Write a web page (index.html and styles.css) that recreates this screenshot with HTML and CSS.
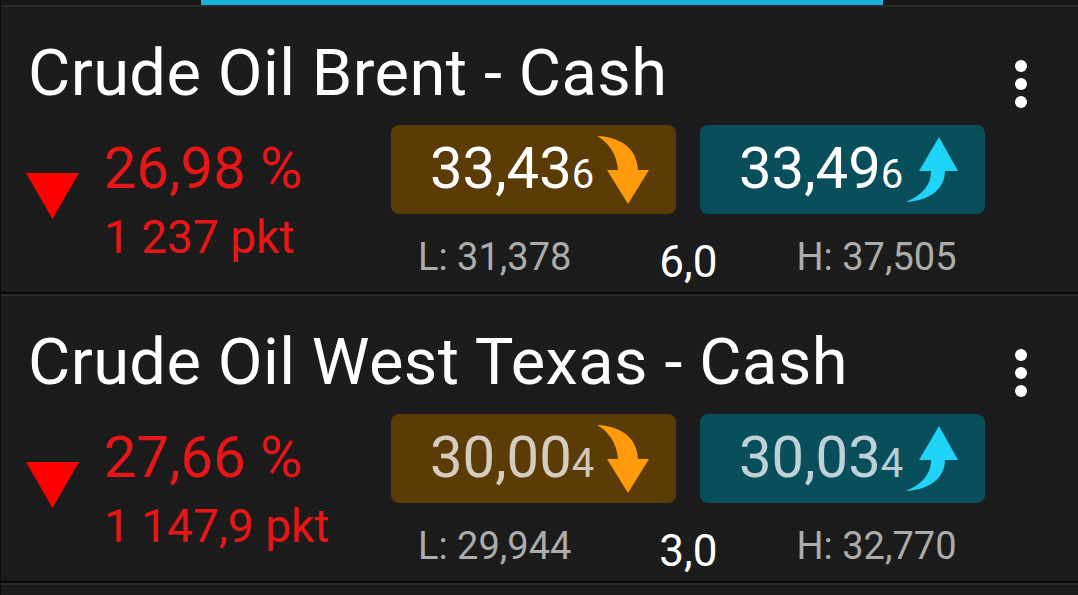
FILE: index.html
```html
<!DOCTYPE html>
<html lang="pl">
<head>
<meta charset="utf-8">
<title>Crude Oil</title>
<link rel="stylesheet" href="styles.css">
</head>
<body>
<div class="tabstrip"><div class="tab-indicator"></div></div>

<div class="row">
  <div class="head">
    <div class="title">Crude Oil Brent - Cash</div>
    <svg class="kebab" width="14" height="50" viewBox="0 0 14 50"><circle cx="7" cy="7" r="6" fill="#fff"/><circle cx="7" cy="25" r="6" fill="#fff"/><circle cx="7" cy="43" r="6" fill="#fff"/></svg>
  </div>
  <div class="body">
    <div class="change">
      <svg class="tri" width="53" height="46" viewBox="0 0 53 46"><polygon points="0,0 53,0 26.5,46" fill="#ff0000"/></svg>
      <div class="nums">
        <div class="pct">26,98 %</div>
        <div class="pkt">1 237 pkt</div>
      </div>
    </div>
    <div class="quotes">
      <div class="box sell">
        <span class="price">33,43<small>6</small></span>
        <svg class="arrow" width="52" height="68" viewBox="0 0 52 68"><path d="M0 0 C22 1 40 11 41 34 L52 34 L31 68 L10 34 L21 34 C20 18 11 6 0 0 Z" fill="#ff9b0c"/></svg>
      </div>
      <div class="box buy">
        <span class="price">33,49<small>6</small></span>
        <svg class="arrow" width="52" height="66" viewBox="0 0 52 66"><path d="M33 0 L52 34 L39 34 C39 52 23 64 0 65 C14 59 25 50 25 34 L13 34 Z" fill="#1fd4f6"/></svg>
      </div>
      <div class="stats">
        <span class="low">L: 31,378</span>
        <span class="spread">6,0</span>
        <span class="high">H: 37,505</span>
      </div>
    </div>
  </div>
</div>

<div class="row">
  <div class="head">
    <div class="title">Crude Oil West Texas - Cash</div>
    <svg class="kebab" width="14" height="50" viewBox="0 0 14 50"><circle cx="7" cy="7" r="6" fill="#fff"/><circle cx="7" cy="25" r="6" fill="#fff"/><circle cx="7" cy="43" r="6" fill="#fff"/></svg>
  </div>
  <div class="body">
    <div class="change">
      <svg class="tri" width="53" height="46" viewBox="0 0 53 46"><polygon points="0,0 53,0 26.5,46" fill="#ff0000"/></svg>
      <div class="nums">
        <div class="pct">27,66 %</div>
        <div class="pkt">1 147,9 pkt</div>
      </div>
    </div>
    <div class="quotes">
      <div class="box sell stale">
        <span class="price">30,00<small>4</small></span>
        <svg class="arrow" width="52" height="68" viewBox="0 0 52 68"><path d="M0 0 C22 1 40 11 41 34 L52 34 L31 68 L10 34 L21 34 C20 18 11 6 0 0 Z" fill="#ff9b0c"/></svg>
      </div>
      <div class="box buy stale">
        <span class="price">30,03<small>4</small></span>
        <svg class="arrow" width="52" height="66" viewBox="0 0 52 66"><path d="M33 0 L52 34 L39 34 C39 52 23 64 0 65 C14 59 25 50 25 34 L13 34 Z" fill="#1fd4f6"/></svg>
      </div>
      <div class="stats">
        <span class="low">L: 29,944</span>
        <span class="spread">3,0</span>
        <span class="high">H: 32,770</span>
      </div>
    </div>
  </div>
</div>
<div class="next"></div>
</body>
</html>
```
FILE: styles.css
```css
* { box-sizing: border-box; }
html, body {
  margin: 0;
  padding: 0;
  background: #1c1c1c;
  font-family: Roboto, "Liberation Sans", sans-serif;
  overflow: hidden;
}
body {
  width: 1078px;
  height: 595px;
  border-left: 1px solid #0c0c0c;
}
.tabstrip {
  height: 5px;
  background: #181818;
}
.tab-indicator {
  margin-left: 200px;
  width: 682px;
  height: 5px;
  background: #17b4d8;
}
.row {
  height: 289px;
  border-top: 2px solid #2a2a2a;
  border-bottom: 2px solid #070707;
}
.row:first-of-type {
  border-top: none;
  height: 287px;
}
.head {
  display: flex;
  justify-content: space-between;
  align-items: flex-start;
  height: 118px;
}
.title {
  margin: 34px 0 0 27px;
  font-size: 65px;
  line-height: 65px;
  letter-spacing: 0.4px;
  color: #ffffff;
  white-space: nowrap;
}
.kebab {
  margin: 52px 50px 0 0;
}
.body {
  display: flex;
  align-items: flex-start;
}
.change {
  display: flex;
  align-items: flex-start;
  width: 390px;
  padding-left: 25px;
}
.tri {
  margin-top: 48px;
}
.nums {
  margin-left: 25px;
  color: #e81616;
}
.pct {
  margin-top: 14px;
  font-size: 58px;
  line-height: 58px;
}
.pkt {
  margin-top: 17px;
  font-size: 46px;
  line-height: 46px;
}
.quotes {
  display: grid;
  grid-template-columns: 285px 285px;
  column-gap: 24px;
  padding-top: 0;
}
.box {
  height: 89px;
  border-radius: 8px;
  display: flex;
  align-items: center;
  padding-left: 39px;
}
.sell { background: #5b3b06; }
.buy { background: #094f5b; }
.price {
  color: #ffffff;
  font-size: 58px;
  line-height: 58px;
  margin-top: 4px;
  white-space: nowrap;
}
.price small {
  font-size: 40px;
}
.stale .price { color: rgba(255, 255, 255, 0.74); }
.arrow {
  margin-left: 3px;
}
.stats {
  grid-column: 1 / 3;
  display: flex;
  align-items: baseline;
  padding-left: 27px;
  margin-top: 19px;
  white-space: nowrap;
}
.low, .high {
  color: #acacac;
  font-size: 38px;
  line-height: 44px;
}
.spread {
  color: #ffffff;
  font-size: 44px;
  line-height: 44px;
  margin-left: 88px;
  position: relative;
  top: 7px;
}
.high {
  margin-left: 79px;
}
.next {
  border-top: 2px solid #2a2a2a;
  height: 20px;
}
```
